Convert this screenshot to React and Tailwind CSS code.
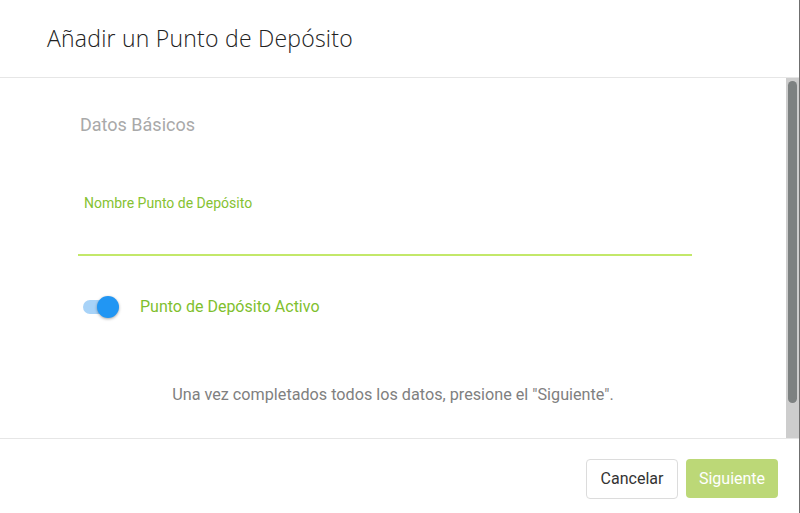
export default function App() {
  return (
    <div className="w-[800px] h-[513px] bg-white flex flex-col overflow-hidden border-r border-[#6f6f6f]" style={{ fontFamily: "Roboto, 'Liberation Sans', sans-serif" }}>
      <div className="h-[78px] shrink-0 border-b border-[#e6e6e6] flex items-center pl-[47px]">
        <h1 className="text-[23px] text-[#222222] font-light tracking-[0.23px]" style={{ fontFamily: "'Open Sans', sans-serif" }}>Añadir un Punto de Depósito</h1>
      </div>
      <div className="h-[360px] shrink-0 flex">
        <div className="flex-1 flex flex-col">
          <div className="pl-[80px] pt-[36px] text-[18px] text-[#a9a9a9] leading-[22px]">Datos Básicos</div>
          <div className="pl-[78px] pt-[59px] w-[692px]">
            <div className="pl-[6px] text-[14px] text-[#86c232] leading-[16px]">Nombre Punto de Depósito</div>
            <div className="h-[43px]"></div>
            <div className="h-[2px] bg-[#c3e86a]"></div>
          </div>
          <div className="pl-[83px] pt-[39px] flex items-center">
            <div className="relative w-[35px] h-[14px] rounded-full bg-[#a8d3f8]">
              <div className="absolute right-[-1px] top-[-4px] w-[22px] h-[22px] rounded-full bg-[#2196f3] shadow-[0_1px_3px_rgba(0,0,0,0.35)]"></div>
            </div>
            <span className="ml-[22px] text-[16px] text-[#7fbf2e]">Punto de Depósito Activo</span>
          </div>
          <div className="pt-[64px] text-center text-[16.2px] text-[#808080]">Una vez completados todos los datos, presione el "Siguiente".</div>
        </div>
        <div className="w-[13px] bg-[#cdcdcd] flex justify-center pt-[3px]">
          <div className="w-[9px] h-[322px] rounded-full bg-[#7d8181]"></div>
        </div>
      </div>
      <div className="flex-1 border-t border-[#e6e6e6] flex justify-end items-start pt-[20px] pr-[21px] gap-[8px]">
        <button className="w-[92px] h-[40px] rounded-[4px] border border-[#dcdcdc] bg-white text-[16px] text-[#333]">Cancelar</button>
        <button className="w-[92px] h-[39px] rounded-[4px] bg-[#bcd877] text-[16px] text-white">Siguiente</button>
      </div>
    </div>
  );
}
